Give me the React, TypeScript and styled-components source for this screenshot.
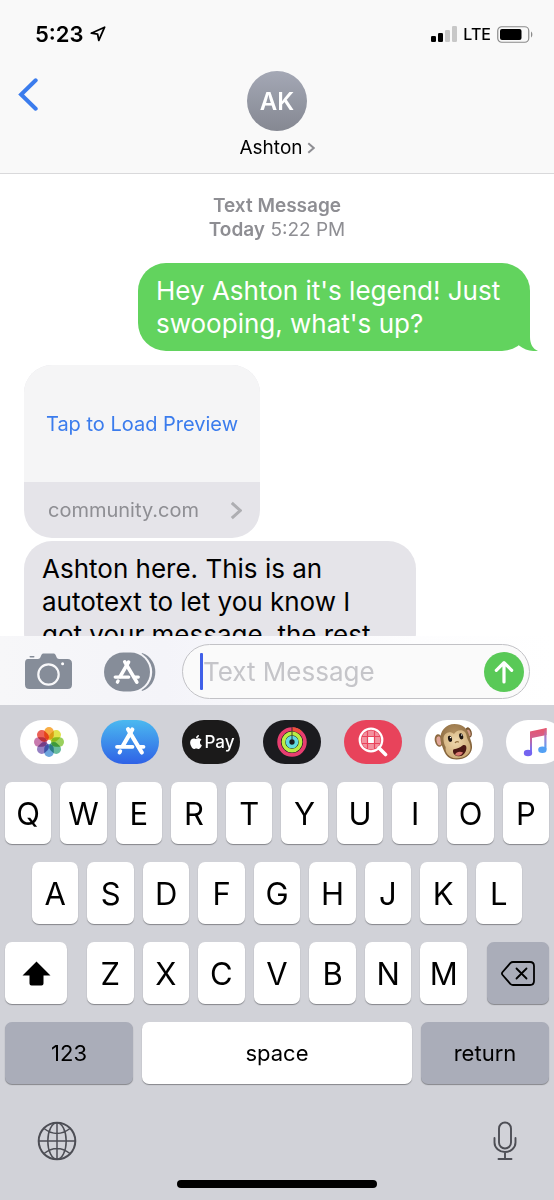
import React from "react";
import styled, { createGlobalStyle, css } from "styled-components";
import { FaApple } from "react-icons/fa";

const GlobalStyle = createGlobalStyle`
  *, *::before, *::after { box-sizing: border-box; }
  body { margin: 0; background: #fff; }
  body, button, input { font-family: Inter, "Liberation Sans", sans-serif; }
  button { margin: 0; padding: 0; border: 0; background: none; color: inherit; cursor: pointer; }
  svg { display: block; flex: none; }
`;

const Screen = styled.div`
  display: flex;
  flex-direction: column;
  height: 100vh;
  overflow: hidden;
  color: #000;
`;

/* ---------- header ---------- */

const Header = styled.header`
  flex: none;
  background: #f9f9f9;
  border-bottom: 1px solid #d9d9db;
`;

const StatusBar = styled.div`
  display: flex;
  align-items: center;
  justify-content: space-between;
  height: 68px;
  padding: 0 21px 0 35px;
`;

const StatusGroup = styled.div`
  display: flex;
  align-items: center;
  gap: 6px;
`;

const Clock = styled.span`
  font-size: 22px;
  line-height: 24px;
  font-weight: 600;
`;

const Network = styled.span`
  font-size: 16px;
  line-height: 24px;
  font-weight: 500;
`;

const NavBar = styled.div`
  display: grid;
  grid-template-columns: 1fr auto 1fr;
  align-items: start;
  padding: 3px 18px 14px;
`;

const BackButton = styled.button`
  justify-self: start;
  padding-top: 7px;
`;

const Contact = styled.button`
  display: flex;
  flex-direction: column;
  align-items: center;
  gap: 5px;
`;

const Avatar = styled.span`
  display: grid;
  place-items: center;
  width: 60px;
  height: 60px;
  border-radius: 50%;
  background: linear-gradient(#a4a8b5, #858892);
  color: #fff;
  font-size: 24px;
  font-weight: 600;
`;

const ContactName = styled.span`
  display: flex;
  align-items: center;
  gap: 4px;
  font-size: 19px;
  line-height: 23px;
`;

/* ---------- thread ---------- */

const Thread = styled.main`
  flex: 1;
  min-height: 0;
  overflow: hidden;
  display: flex;
  flex-direction: column;
  align-items: flex-start;
  padding: 20px 24px 0;
`;

const Stamp = styled.div`
  align-self: stretch;
  text-align: center;
  font-size: 19px;
  line-height: 24px;
  color: #8e8e93;
  strong { font-weight: 600; }
`;

const Bubble = styled.p<{ $sent?: boolean }>`
  position: relative;
  flex: none;
  width: 392px;
  max-width: 85%;
  margin: 0;
  padding: 11px 18px;
  border-radius: 28px;
  font-size: 26px;
  line-height: 33px;
  ${(p) =>
    p.$sent
      ? css`
          align-self: flex-end;
          margin: 21px 0 14px;
          background: #62d35e;
          color: #fff;
        `
      : css`
          background: #e5e4e9;
        `}
`;

const Tail = styled.svg`
  position: absolute;
  right: -8px;
  bottom: 0;
`;

const PreviewCard = styled.article`
  flex: none;
  width: 236px;
  margin-bottom: 3px;
  border-radius: 28px;
  overflow: hidden;
  background: #e5e4e9;
`;

const PreviewButton = styled.button`
  display: block;
  width: 100%;
  height: 117px;
  background: #f5f5f6;
  color: #3b7ced;
  font-size: 20px;
  white-space: nowrap;
`;

const PreviewLink = styled.a`
  display: flex;
  align-items: center;
  justify-content: space-between;
  height: 56px;
  padding: 0 18px 0 24px;
  color: #8e8e93;
  font-size: 20px;
  text-decoration: none;
`;

/* ---------- composer ---------- */

const Composer = styled.form`
  flex: none;
  display: flex;
  align-items: center;
  padding: 8px 24px 6px;
  background: linear-gradient(90deg, #f7f7f9, #f4f4f9 30%, #fdfdfe 75%, #fff);
`;

const ToolButton = styled.button`
  flex: none;
  width: 79px;
`;

const Field = styled.div`
  flex: 1;
  display: flex;
  align-items: center;
  min-width: 0;
  height: 55px;
  padding: 0 5px 0 17px;
  border: 1px solid #c2c2c6;
  border-radius: 28px;
  background: #fafafa;
`;

const Caret = styled.span`
  flex: none;
  width: 3px;
  height: 37px;
  border-radius: 1px;
  background: #4060e8;
`;

const TextInput = styled.input`
  flex: 1;
  min-width: 0;
  padding: 0;
  border: 0;
  outline: 0;
  background: none;
  font-size: 26px;
  &::placeholder { color: #c5c5c9; opacity: 1; }
`;

const SendButton = styled.button`
  display: grid;
  place-items: center;
  flex: none;
  width: 40px;
  height: 40px;
  border-radius: 50%;
  background: #59c957;
`;

/* ---------- keyboard ---------- */

const KeyboardPanel = styled.section`
  flex: none;
  background: #d1d2d8;
`;

const AppStrip = styled.nav`
  display: flex;
  gap: 23px;
  padding: 15px 0 18px 20px;
  overflow: hidden;
`;

const AppPill = styled.button<{ $bg: string }>`
  display: flex;
  align-items: center;
  justify-content: center;
  gap: 1px;
  flex: none;
  width: 58px;
  height: 44px;
  border-radius: 22px;
  overflow: hidden;
  background: ${(p) => p.$bg};
  color: #fff;
`;

const PayText = styled.span`
  font-size: 17px;
  line-height: 20px;
  font-weight: 500;
`;

const Keys = styled.div`
  display: flex;
  flex-direction: column;
  gap: 18px;
  padding: 0 5px;
`;

const KeyRow = styled.div<{ $inset?: boolean }>`
  display: flex;
  gap: 9px;
  padding: 0 ${(p) => (p.$inset ? 27 : 0)}px;
`;

const LetterGroup = styled.div`
  flex: 1;
  display: flex;
  gap: 9px;
  margin: 0 11px;
`;

const Key = styled.button<{ $dark?: boolean; $word?: boolean; $width?: number }>`
  display: grid;
  place-items: center;
  flex: ${(p) => (p.$width ? `0 0 ${p.$width}px` : "1 1 0")};
  min-width: 0;
  height: 62px;
  border-radius: 7px;
  background: ${(p) => (p.$dark ? "#aaadb9" : "#fff")};
  box-shadow: 0 1px 1px #85868b;
  font-size: ${(p) => (p.$word ? 22 : 31)}px;
`;

const KeyboardFooter = styled.div`
  display: flex;
  justify-content: space-between;
  align-items: center;
  padding: 37px 37px 0;
`;

const HomeIndicator = styled.div`
  width: 36%;
  height: 8px;
  margin: 19px auto 12px;
  border-radius: 4px;
  background: #000;
`;

/* ---------- drawings ---------- */

const LocationArrow = () => (
  <svg width="16" height="16" viewBox="0 0 16 16" fill="none" stroke="#000" strokeWidth="1.8" strokeLinejoin="round">
    <path d="M1.3 7.2 14.600 1.2 8.8 14.400 7.6 8.2Z" />
  </svg>
);

const SignalBars = () => (
  <svg width="26" height="16" viewBox="0 0 26 16">
    <rect x="0" y="10" width="5" height="6" rx="1.3" />
    <rect x="7" y="7" width="5" height="9" rx="1.3" />
    <rect x="14" y="4" width="5" height="12" rx="1.3" fill="#c8c8c8" />
    <rect x="21" y="0" width="5" height="16" rx="1.3" fill="#c8c8c8" />
  </svg>
);

const Battery = () => (
  <svg width="36" height="17" viewBox="0 0 36 17">
    <rect x=".75" y=".75" width="31" height="15.5" rx="4" fill="none" stroke="#8b8b8b" strokeWidth="1.2" />
    <rect x="3" y="3" width="21.500" height="11" rx="2" />
    <path d="M34 5.500c1.800.8 1.800 5.200 0 6Z" fill="#8b8b8b" />
  </svg>
);

const Chevron = ({ w, h, stroke, color, left }: { w: number; h: number; stroke: number; color: string; left?: boolean }) => {
  const s = stroke / 2 + 0.3;
  return (
    <svg width={w} height={h} viewBox={`0 0 ${w} ${h}`} fill="none" stroke={color} strokeWidth={stroke} strokeLinecap={left ? "round" : "butt"}>
      <path d={left ? `M${w - s} ${s}L${s + 0.8} ${h / 2}L${w - s} ${h - s}` : `M${s} ${s}L${w - s} ${h / 2}L${s} ${h - s}`} />
    </svg>
  );
};

const CameraIcon = () => (
  <svg width="49" height="37" viewBox="0 0 49 37">
    <path
      fill="#868d99"
      d="M4 6h10c1.200 0 1.900-.6 2.400-1.700l1-2.300C18 .8 18.700.5 20 .5h9c1.300 0 2 .3 2.600 1.500l1 2.300C33.100 5.400 33.800 6 35 6h8.500c3 0 4.500 1.500 4.500 4.500v21c0 3-1.500 4.500-4.500 4.500h-38C2.500 36 1 34.500 1 31.500v-21C1 7.500 1.800 6 4 6Z"
    />
    <rect x="5.500" y="3" width="5" height="1.600" rx=".8" fill="#868d99" />
    <circle cx="24.500" cy="21.500" r="10.200" fill="none" stroke="#f8f8fa" strokeWidth="2.200" />
    <circle cx="38.600" cy="10.800" r="1.500" fill="#fff" />
  </svg>
);

const StoreGlyph = () => (
  <g fill="none" stroke="#fff" strokeLinecap="round">
    <path strokeWidth="4.200" d="M31.300 9.500 21.800 26" />
    <path strokeWidth="4.200" d="M27 9.300 40.800 32.500" />
    <path strokeWidth="3.800" d="M16 26.800h15.500M37.500 26.800h5" />
    <path strokeWidth="3.800" d="m19.300 31.200-.8 1.400" />
  </g>
);

const StoreGray = () => (
  <svg width="53" height="40" viewBox="0 0 53 40">
    <path d="M39 1c9 3 13.300 11 13.300 19S48 36 39 39c-3-6-3-32 0-38Z" fill="#868d99" />
    <rect x="-1" y="-1" width="50.200" height="42" rx="21" fill="#f6f6fa" />
    <rect x="1" y=".5" width="46" height="39" rx="19.500" fill="#868d99" />
    <g transform="translate(-1.700 1.800) scale(.87)">
      <StoreGlyph />
    </g>
  </svg>
);

const StoreIcon = () => (
  <svg width="58" height="44" viewBox="0 0 58 44">
    <StoreGlyph />
  </svg>
);

const petals = ["#f7a531", "#dfe03a", "#8fcb4b", "#58b592", "#5c9bd8", "#8a72bd", "#c26ba5", "#ea5045"];

const PhotosIcon = () => (
  <svg width="32" height="32" viewBox="-16 -16 32 32">
    {petals.map((c, i) => (
      <rect
        key={c}
        x="-4.800"
        y="-15"
        width="9.600"
        height="13"
        rx="4.800"
        fill={c}
        fillOpacity=".9"
        transform={`rotate(${i * 45})`}
        style={{ mixBlendMode: "multiply" }}
      />
    ))}
  </svg>
);

const ActivityIcon = () => (
  <svg width="30" height="30" viewBox="-15 -15 30 30" fill="none" strokeWidth="3.700">
    <circle r="12.900" stroke="#e83e70" />
    <path d="M0-12.900a12.900 12.900 0 0 1 8.500 3.200" stroke="#f0503c" />
    <circle r="8.600" stroke="#b9ee45" />
    <circle r="4.500" stroke="#62dbe0" />
    <path d="M0-14.800v4M0-10.400v4M0-6v3.500" stroke="#1b1b1f" strokeWidth=".8" />
  </svg>
);

const ImageSearchIcon = () => (
  <svg width="30" height="30" viewBox="0 0 30 30" fill="none" stroke="#fff">
    <circle cx="13" cy="13" r="9.500" fill="#f3929f" stroke="none" />
    <path d="M10 10h6v6h-6Z" fill="#fff" stroke="none" />
    <path d="M4 9.500h18M3 16.500h20M9.500 4v18M16.500 4v18" stroke="#e8435b" strokeWidth="1.200" />
    <circle cx="13" cy="13" r="11.300" strokeWidth="2.200" />
    <path d="m21 21 6.500 6.500" strokeWidth="3.600" strokeLinecap="round" />
  </svg>
);

const MonkeyIcon = () => (
  <svg width="40" height="38" viewBox="0 0 40 38">
    <defs>
      <radialGradient id="fur" cx=".45" cy=".3" r=".8">
        <stop offset="0" stopColor="#b59262" />
        <stop offset="1" stopColor="#775730" />
      </radialGradient>
      <radialGradient id="face" cx=".45" cy=".4" r=".7">
        <stop offset="0" stopColor="#f0d9ae" />
        <stop offset="1" stopColor="#c8a46e" />
      </radialGradient>
    </defs>
    <ellipse cx="4.800" cy="17.500" rx="4" ry="6.300" fill="#8d6a41" transform="rotate(-12 4.800 17.500)" />
    <ellipse cx="5" cy="17.800" rx="2.400" ry="4.500" fill="#e0a698" transform="rotate(-12 5 17.800)" />
    <ellipse cx="34.500" cy="9.500" rx="3.200" ry="5.300" fill="#7a5832" transform="rotate(-16 34.500 9.500)" />
    <ellipse cx="34.800" cy="9.800" rx="1.600" ry="3.500" fill="#d29886" transform="rotate(-16 34.800 9.800)" />
    <path d="M6.500 17C5.500 8 12 1 20.500 1c8 0 13 4.500 14.500 11 .8 3.500 3.500 8 3 13-.8 7-7.500 11.500-15.500 11.500-6.500 0-10.500-3.500-12.500-8.500C8.500 24 7 21 6.500 17Z" fill="url(#fur)" />
    <path d="M9.500 16.500c-.5-6 6-9.500 10.500-5.500 3-5.500 11.500-5 12.500 1.500.4 2.500 1.200 4 2.500 6.500 2.500 5 2 9.500-2 13-4.500 3.700-12.500 4.500-17 1.500-3.500-2.300-5-6-4.300-9.500-1.200-2-2-4.500-2.200-7.500Z" fill="url(#face)" />
    <ellipse cx="16" cy="15.800" rx="2" ry="3.100" fill="#1d1511" transform="rotate(-12 16 15.800)" />
    <ellipse cx="27.200" cy="13.300" rx="2" ry="3.100" fill="#1d1511" transform="rotate(-12 27.200 13.300)" />
    <circle cx="16.500" cy="14.500" r=".7" fill="#fff" />
    <circle cx="27.700" cy="12" r=".7" fill="#fff" />
    <path d="M21.300 19.500q1.500-1.300 3.200-.5" fill="none" stroke="#94703f" strokeWidth="1.200" strokeLinecap="round" />
    <path d="M20 26.200c3-.2 6-1.700 8.500-3.700 2.500-1.200 4 .2 3.900 2.500-.2 4.500-3.300 8.300-7.200 8.300-3.800 0-6.200-2.200-6.200-5 0-1.300.2-2 1-2.100Z" fill="#4a1713" />
    <path d="M21 31.500c1-2.700 5-3.700 8-2-1.200 2.300-2.800 3.300-4.500 3.300-1.500 0-2.500-.4-3.500-1.300Z" fill="#d9786f" />
  </svg>
);

const MusicIcon = () => (
  <svg width="26" height="30" viewBox="0 0 26 30">
    <defs>
      <linearGradient id="note" gradientUnits="userSpaceOnUse" x1="0" y1="1" x2="0" y2="29">
        <stop offset="0" stopColor="#e8556a" />
        <stop offset=".35" stopColor="#d2618f" />
        <stop offset=".75" stopColor="#7c72ee" />
        <stop offset="1" stopColor="#6a62f0" />
      </linearGradient>
      <linearGradient id="noteRight" x1="0" y1="0" x2="0" y2="1">
        <stop offset="0" stopColor="#e8566e" />
        <stop offset=".5" stopColor="#9c86d8" />
        <stop offset="1" stopColor="#4fa3f5" />
      </linearGradient>
    </defs>
    <path d="M8 4.500 24.500 1v7L10 11V26H8Z" fill="url(#note)" />
    <ellipse cx="6" cy="26" rx="4.200" ry="3.300" fill="#7464f0" />
    <path d="M22.300 2 24.500 1v21.500h-2.200Z" fill="url(#noteRight)" />
    <ellipse cx="20.400" cy="22.800" rx="4.200" ry="3.300" fill="#53a0f4" />
  </svg>
);

const ShiftIcon = () => (
  <svg width="29" height="25" viewBox="0 0 29 25">
    <path d="M14.500.5 28.500 14.500H21.500V22.500Q21.500 24.500 19.500 24.500H9.500Q7.500 24.500 7.500 22.500V14.500H.5Z" />
  </svg>
);

const DeleteIcon = () => (
  <svg width="34" height="25" viewBox="0 0 34 25" fill="none" stroke="#000" strokeWidth="1.800" strokeLinejoin="round">
    <path d="M12 1h17q4 0 4 4v15q0 4-4 4H12q-1.500 0-2.700-1.200L1.600 14q-1.300-1.500 0-3L9.300 2.200Q10.500 1 12 1Z" />
    <path d="m15.500 7.500 10 10M25.500 7.500l-10 10" strokeLinecap="round" />
  </svg>
);

const GlobeIcon = () => (
  <svg width="40" height="40" viewBox="-20 -20 40 40" fill="none" stroke="#4d4e55" strokeWidth="1.500">
    <circle r="18.300" strokeWidth="2" />
    <ellipse rx="9.200" ry="18.300" />
    <path d="M0-18.300v36.600M-18.300 0h36.600M-13-12.500Q0-2.500 13-12.500M-13 12.500Q0 2.500 13 12.500" />
  </svg>
);

const MicIcon = () => (
  <svg width="24" height="40" viewBox="0 0 24 40" fill="none" stroke="#4d4e55" strokeWidth="1.900" strokeLinecap="round">
    <rect x="6" y="1.500" width="12" height="26" rx="6" />
    <path d="M1.500 17v4.500a10.500 9.500 0 0 0 21 0V17M12 31v6.500M5.500 38h13" />
  </svg>
);

const apps = [
  { name: "Photos", bg: "#fff", art: <PhotosIcon /> },
  { name: "App Store", bg: "linear-gradient(#4bb9f0, #2f62e6)", art: <StoreIcon /> },
  { name: "Apple Pay", bg: "#1b1a1a", art: <><FaApple size={16} /><PayText>Pay</PayText></> },
  { name: "Activity", bg: "#1b1b1f", art: <ActivityIcon /> },
  { name: "Image search", bg: "#e8435b", art: <ImageSearchIcon /> },
  { name: "Animoji", bg: "#fff", art: <MonkeyIcon /> },
  { name: "Music", bg: "#fff", art: <MusicIcon /> },
];

const letters = (row: string) => row.split("").map((l) => <Key key={l} type="button">{l}</Key>);

export default function App() {
  return (
    <Screen>
      <GlobalStyle />
      <Header>
        <StatusBar>
          <StatusGroup>
            <Clock>5:23</Clock>
            <LocationArrow />
          </StatusGroup>
          <StatusGroup>
            <SignalBars />
            <Network>LTE</Network>
            <Battery />
          </StatusGroup>
        </StatusBar>
        <NavBar>
          <BackButton type="button" aria-label="Back">
            <Chevron w={20} h={33} stroke={4} color="#3b7ced" left />
          </BackButton>
          <Contact type="button">
            <Avatar>AK</Avatar>
            <ContactName>
              Ashton
              <Chevron w={8} h={12} stroke={2} color="#8e8e93" />
            </ContactName>
          </Contact>
        </NavBar>
      </Header>

      <Thread>
        <Stamp>
          <strong>Text Message</strong>
          <br />
          <strong>Today</strong> 5:22 PM
        </Stamp>
        <Bubble $sent>
          Hey Ashton it's legend! Just swooping, what's up?
          <Tail width="32" height="28" viewBox="0 0 32 28" aria-hidden="true">
            <path d="M13 0H24V14C24 21 27 26 32 28C25 28.500 19 27 13 22.500Z" fill="#62d35e" />
          </Tail>
        </Bubble>
        <PreviewCard>
          <PreviewButton type="button">Tap to Load Preview</PreviewButton>
          <PreviewLink href="#community">
            community.com
            <Chevron w={12} h={19} stroke={3} color="#aeaeb2" />
          </PreviewLink>
        </PreviewCard>
        <Bubble>
          Ashton here. This is an
          <br />
          autotext to let you know I
          <br />
          got your message, the rest
        </Bubble>
      </Thread>

      <Composer onSubmit={(e) => e.preventDefault()}>
        <ToolButton type="button" aria-label="Camera"><CameraIcon /></ToolButton>
        <ToolButton type="button" aria-label="Apps"><StoreGray /></ToolButton>
        <Field>
          <Caret />
          <TextInput type="text" placeholder="Text Message" aria-label="Text Message" />
          <SendButton type="submit" aria-label="Send">
            <svg width="20" height="24" viewBox="0 0 20 24" fill="none" stroke="#fff" strokeWidth="3.200" strokeLinecap="round" strokeLinejoin="round">
              <path d="M10 22V3M2.300 10.300 10 2.600l7.700 7.700" />
            </svg>
          </SendButton>
        </Field>
      </Composer>

      <KeyboardPanel aria-label="Keyboard">
        <AppStrip>
          {apps.map((a) => (
            <AppPill key={a.name} type="button" aria-label={a.name} $bg={a.bg}>{a.art}</AppPill>
          ))}
        </AppStrip>
        <Keys>
          <KeyRow>{letters("QWERTYUIOP")}</KeyRow>
          <KeyRow $inset>{letters("ASDFGHJKL")}</KeyRow>
          <KeyRow>
            <Key type="button" $width={62} aria-label="Shift"><ShiftIcon /></Key>
            <LetterGroup>{letters("ZXCVBNM")}</LetterGroup>
            <Key type="button" $width={62} $dark aria-label="Delete"><DeleteIcon /></Key>
          </KeyRow>
          <KeyRow>
            <Key type="button" $width={128} $dark $word>123</Key>
            <Key type="button" $word>space</Key>
            <Key type="button" $width={128} $dark $word>return</Key>
          </KeyRow>
        </Keys>
        <KeyboardFooter>
          <button type="button" aria-label="Next keyboard"><GlobeIcon /></button>
          <button type="button" aria-label="Dictate"><MicIcon /></button>
        </KeyboardFooter>
        <HomeIndicator />
      </KeyboardPanel>
    </Screen>
  );
}
